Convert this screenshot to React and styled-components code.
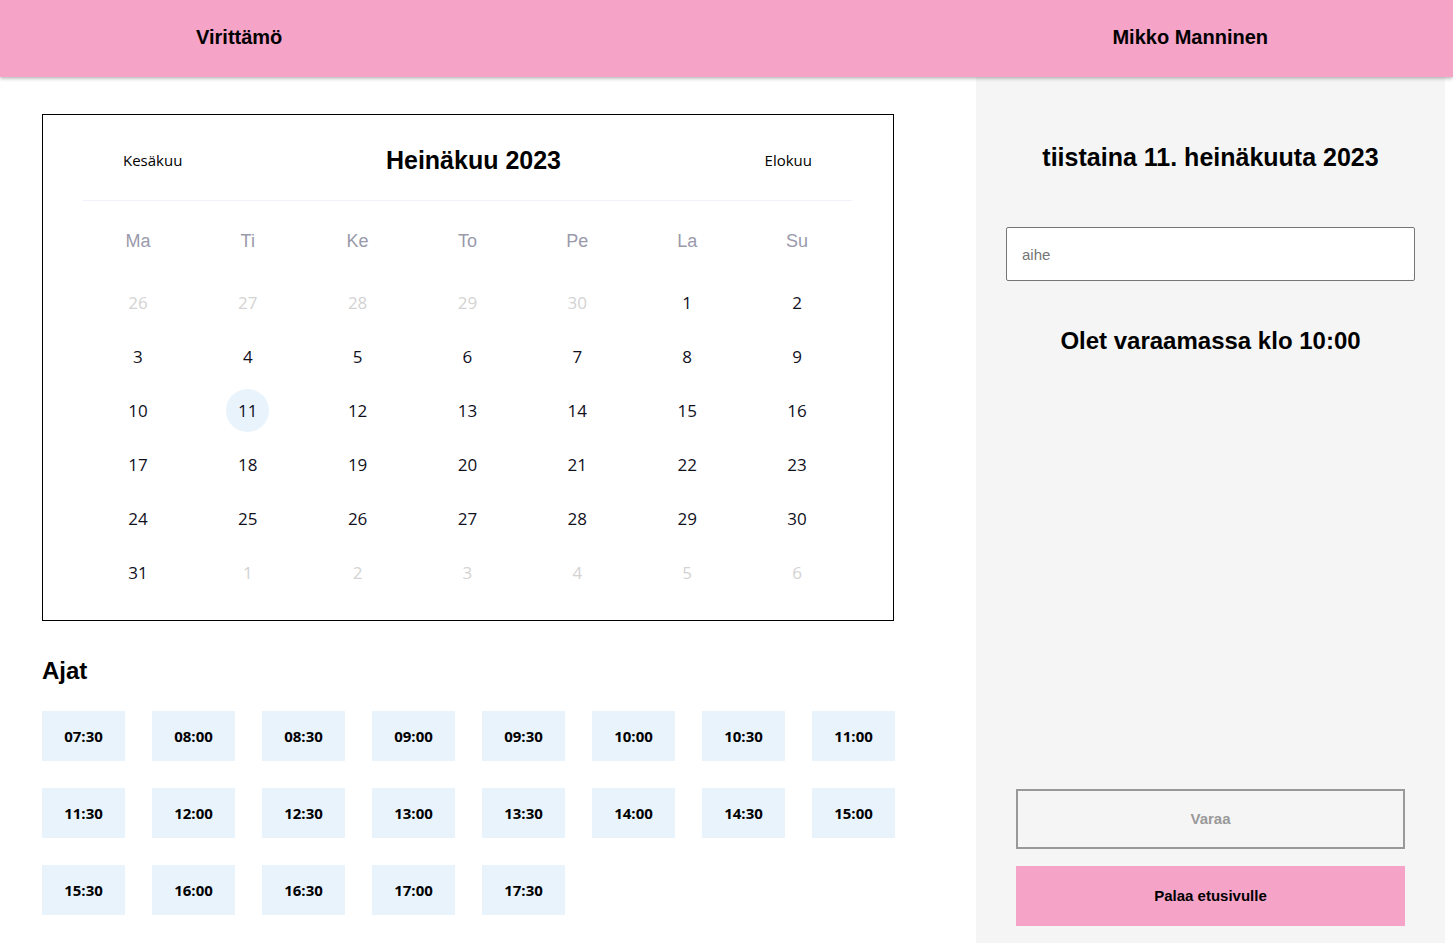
import React, { useState } from "react";
import styled, { createGlobalStyle, css } from "styled-components";

const GlobalStyle = createGlobalStyle`
  *, *::before, *::after { box-sizing: border-box; }
  body {
    margin: 0;
    background: #fff;
    color: #000;
    font-family: Arial, "Liberation Sans", sans-serif;
  }
`;

const humanist = css`
  font-family: "Segoe UI", "Open Sans", "Noto Sans", sans-serif;
`;

const Page = styled.div`
  display: flex;
  flex-direction: column;
  min-height: 100vh;
`;

const Header = styled.header`
  display: flex;
  flex: none;
  align-items: center;
  justify-content: space-between;
  height: 77px;
  padding: 0 185px 4px 196px;
  background: #f6a3c8;
  box-shadow: 0 1px 4px rgba(0, 0, 0, 0.35);
  position: relative;
  z-index: 1;
`;

const HeaderLink = styled.a`
  color: inherit;
  font-size: 20px;
  font-weight: 700;
  line-height: 24px;
  text-decoration: none;
`;

const Columns = styled.div`
  display: grid;
  grid-template-columns: minmax(0, 1fr) 469px;
  flex: 1;
  margin-right: 8px;
`;

const Main = styled.main`
  padding: 37px 81px 28px 42px;
`;

const Heading = styled.h2`
  margin: 0;
  font-size: ${(p) => (p.$date ? "25px" : "24px")};
  font-weight: 700;
  line-height: 28px;
`;

const Card = styled.section`
  margin-right: 1px;
  padding: 0 41px 20px 40px;
  border: 1px solid #000;
`;

const MonthBar = styled.div`
  display: flex;
  align-items: center;
  justify-content: space-between;
  height: 86px;
  padding: 5px 40px 0;
  border-bottom: 1px solid #f1f0fd;
`;

const MonthButton = styled.button`
  ${humanist}
  padding: 0;
  border: 0;
  background: none;
  color: #000;
  font-size: 15px;
  line-height: 20px;
  cursor: pointer;
`;

const MonthTable = styled.table`
  width: 100%;
  margin-top: 5px;
  border-collapse: collapse;
  table-layout: fixed;
`;

const Weekday = styled.th`
  height: 70px;
  padding: 0;
  color: #9a9aab;
  font-size: 18px;
  font-weight: 400;
`;

const DayCell = styled.td`
  height: 54px;
  padding: 0 0 1px;
  text-align: center;
`;

const DayButton = styled.button`
  ${humanist}
  display: block;
  width: 43px;
  height: 43px;
  margin: 0 auto;
  padding: 1px 0 0;
  border: 0;
  border-radius: 50%;
  background: ${(p) => (p.$selected ? "#e8f3fc" : "transparent")};
  color: ${(p) => (p.$outside ? "#d3d3d3" : "#10101c")};
  font-size: 17px;
  line-height: 24px;
  cursor: pointer;
`;

const Times = styled.section`
  display: grid;
  gap: 26px;
  margin-top: 36px;
`;

const SlotGrid = styled.div`
  display: grid;
  grid-template-columns: repeat(8, minmax(0, 1fr));
  gap: 27px;
`;

const Slot = styled.button`
  ${humanist}
  height: 50px;
  padding: 0;
  border: 0;
  background: #e8f3fc;
  color: #000;
  font-size: 15px;
  font-weight: 700;
  line-height: 20px;
  cursor: pointer;
`;

const Booking = styled.aside`
  display: flex;
  flex-direction: column;
  padding: 66px 30px 17px;
  background: #f5f5f5;
  text-align: center;
`;

const TopicInput = styled.input`
  width: 100%;
  height: 54px;
  margin: 56px 0 46px;
  padding: 0 15px;
  border: 1px solid #767676;
  border-radius: 2px;
  background: #fff;
  font-family: inherit;
  font-size: 15px;

  &::placeholder {
    color: #757575;
  }
`;

const Actions = styled.div`
  display: grid;
  gap: 17px;
  margin: auto 10px 0;
`;

const ActionButton = styled.button`
  height: 60px;
  padding: 0;
  border: ${(p) => (p.$primary ? "0" : "2px solid #999")};
  background: ${(p) => (p.$primary ? "#f6a3c8" : "transparent")};
  color: ${(p) => (p.$primary ? "#000" : "#999")};
  font-family: inherit;
  font-size: 15px;
  font-weight: 700;
  line-height: 20px;
`;

const weekdays = ["Ma", "Ti", "Ke", "To", "Pe", "La", "Su"];

// Six weeks, starting on Monday 26 June 2023.
const weeks = Array.from({ length: 6 }, (_, week) =>
  Array.from({ length: 7 }, (_, day) => {
    const date = new Date(2023, 5, 26 + week * 7 + day);
    return { number: date.getDate(), outside: date.getMonth() !== 6 };
  })
);

// Half-hour slots from 07:30 to 17:30.
const slots = Array.from({ length: 21 }, (_, i) => {
  const minutes = 450 + i * 30;
  const hour = String(Math.floor(minutes / 60)).padStart(2, "0");
  return `${hour}:${minutes % 60 ? "30" : "00"}`;
});

const dayNames = ["sunnuntaina", "maanantaina", "tiistaina", "keskiviikkona", "torstaina", "perjantaina", "lauantaina"];

export default function App() {
  const [day, setDay] = useState(11);
  const [time, setTime] = useState("10:00");
  const dayName = dayNames[new Date(2023, 6, day).getDay()];

  return (
    <Page>
      <GlobalStyle />
      <Header>
        <HeaderLink href="#">Virittämö</HeaderLink>
        <HeaderLink href="#">Mikko Manninen</HeaderLink>
      </Header>
      <Columns>
        <Main>
          <Card>
            <MonthBar>
              <MonthButton type="button">Kesäkuu</MonthButton>
              <Heading $date>Heinäkuu 2023</Heading>
              <MonthButton type="button">Elokuu</MonthButton>
            </MonthBar>
            <MonthTable>
              <thead>
                <tr>
                  {weekdays.map((name) => (
                    <Weekday key={name} scope="col">{name}</Weekday>
                  ))}
                </tr>
              </thead>
              <tbody>
                {weeks.map((week, i) => (
                  <tr key={i}>
                    {week.map(({ number, outside }) => (
                      <DayCell key={number}>
                        <DayButton
                          type="button"
                          $outside={outside}
                          $selected={!outside && number === day}
                          onClick={() => !outside && setDay(number)}
                        >
                          {number}
                        </DayButton>
                      </DayCell>
                    ))}
                  </tr>
                ))}
              </tbody>
            </MonthTable>
          </Card>
          <Times>
            <Heading>Ajat</Heading>
            <SlotGrid>
              {slots.map((slot) => (
                <Slot key={slot} type="button" onClick={() => setTime(slot)}>{slot}</Slot>
              ))}
            </SlotGrid>
          </Times>
        </Main>
        <Booking>
          <Heading $date>{dayName} {day}. heinäkuuta 2023</Heading>
          <TopicInput type="text" placeholder="aihe" aria-label="aihe" />
          <Heading>Olet varaamassa klo {time}</Heading>
          <Actions>
            <ActionButton type="button" disabled>Varaa</ActionButton>
            <ActionButton type="button" $primary>Palaa etusivulle</ActionButton>
          </Actions>
        </Booking>
      </Columns>
    </Page>
  );
}
